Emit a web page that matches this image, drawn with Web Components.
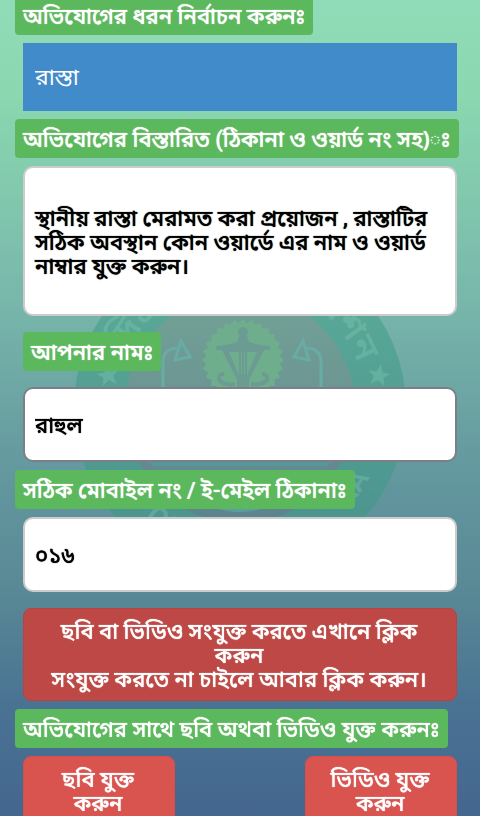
<!DOCTYPE html>
<html lang="bn"><head><meta charset="utf-8"><meta name="viewport" content="width=device-width"><title>অভিযোগ ফর্ম</title>
<style>
html{min-height:100%}
body{margin:0;color:#fff;font-family:Roboto,"Noto Sans Bengali",sans-serif}
</style></head><body>
<page-backdrop></page-backdrop>
<complaint-form>
<field-label>অভিযোগের ধরন নির্বাচন করুনঃ</field-label>
<type-select></type-select>
<field-label>অভিযোগের বিস্তারিত (ঠিকানা ও ওয়ার্ড নং সহ)ঃ</field-label>
<detail-field label="অভিযোগের বিস্তারিত" value="স্থানীয় রাস্তা মেরামত করা প্রয়োজন , রাস্তাটির সঠিক অবস্থান কোন ওয়ার্ডে এর নাম ও ওয়ার্ড নাম্বার যুক্ত করুন।"></detail-field>
<field-label class="inset">আপনার নামঃ</field-label>
<text-field class="strong" label="আপনার নাম" value="রাহুল"></text-field>
<field-label>সঠিক মোবাইল নং / ই-মেইল ঠিকানাঃ</field-label>
<text-field label="সঠিক মোবাইল নং / ই-মেইল ঠিকানা" value="০১৬"></text-field>
<action-button class="wide">ছবি বা ভিডিও সংযুক্ত করতে এখানে ক্লিক করুন<br>সংযুক্ত করতে না চাইলে আবার ক্লিক করুন।</action-button>
<field-label>অভিযোগের সাথে ছবি অথবা ভিডিও যুক্ত করুনঃ</field-label>
<button-row><action-button>ছবি যুক্ত করুন</action-button><action-button>ভিডিও যুক্ত করুন</action-button></button-row>
</complaint-form>
<script>
function define(name, html, init) {
  const t = document.createElement('template');
  t.innerHTML = html;
  customElements.define(name, class extends HTMLElement {
    constructor() { super(); this.attachShadow({mode: 'open'}).append(t.content.cloneNode(true)); }
    connectedCallback() { if (init) init(this, this.shadowRoot); }
  });
}
const spikes = Array.from({length: 56}, (_, i) => {
  const a = i * Math.PI / 28, r = i % 2 ? 37 : 41;
  return Math.round(Math.cos(a) * r * 10) / 10 + ',' + Math.round(Math.sin(a) * r * 10) / 10;
}).join(' ');
const star = '0,-11 3,-3 11,-3 5,2 7,10 0,5 -7,10 -5,2 -11,-3 -3,-3';

define('page-backdrop', `<style>
:host{position:fixed;inset:0;z-index:-1;display:grid;place-items:center;overflow:hidden;
background:linear-gradient(180deg,#90dcb8 0%,#8ad7b0 12%,#84cdae 20%,#77b5aa 38%,#64999f 57%,#588895 73%,#4a7393 86%,#44668f 100%)}
svg{width:334px;height:334px;display:block;font-family:Roboto,"Noto Sans Bengali",sans-serif;font-weight:600}
</style>
<svg viewBox="-167 -167 334 334" aria-hidden="true">
<defs><path id="top" d="M-126 0A126 126 0 0 1 126 0"/><path id="bottom" d="M-147 0A147 147 0 0 0 147 0"/>
<linearGradient id="disc" x1="0" y1="0" x2="0" y2="1"><stop offset="0" stop-color="#73a295"/><stop offset=".45" stop-color="#6b9593"/><stop offset="1" stop-color="#5c838c"/></linearGradient></defs>
<circle r="166" fill="#3a9a84" fill-opacity=".5"/>
<circle r="115" fill="url(#disc)"/>
<g fill="#86cbb6" fill-opacity=".34">
<g font-size="36"><text><textPath href="#top" startOffset="58">দিগ্রা</textPath></text>
<text text-anchor="end"><textPath href="#top" startOffset="350">পুরেশন</textPath></text></g>
<g font-size="29"><text><textPath href="#bottom" startOffset="78">Y</textPath></text><text><textPath href="#bottom" startOffset="126">CO</textPath></text><text><textPath href="#bottom" startOffset="280">BD</textPath></text><text><textPath href="#bottom" startOffset="352">RA</textPath></text></g>
<polygon transform="translate(-132 -33) rotate(-10)" points="${star}"/><polygon transform="translate(139 -33) rotate(10)" points="${star}"/>
</g>
<g transform="translate(3 -48)">
<polygon points="${spikes}" fill="#6fae8d"/>
<g fill="#6b9b92"><circle cy="-28" r="5"/><path d="M-4-24H4L6-18Q14-15 27-14V-10H21L6 20V32H-6V20L-21-10H-27V-14Q-14-15-6-18Z"/></g>
<path d="M-14-8H-4V15ZM14-8H4V15ZM-2-8H-1V14H-2ZM2-8H1V14H2Z" fill="#6fae8d"/>
<path d="M-8 24Q-18 26-24 20Q-25 14-19 14M8 24Q18 26 24 20Q25 14 19 14" fill="none" stroke="#6b9b92" stroke-width="4"/>
</g>
<g fill="none" stroke="#69aba5" stroke-width="3">
<path d="M-77-18V-46Q-77-60-61-60M81-18V-46Q81-60 65-60"/>
<path d="M-59-67L-50-51L-65-48ZM63-67L54-51L69-48Z"/></g>
<path d="M-92 54H92L86 58H-86Z" fill="#579798"/>
<path d="M-78 64Q0 144 78 64Z" fill="#5b9da1"/>
</svg>`);

define('complaint-form', `<style>
:host{display:block;padding:0 23px 24px 15px;margin-top:-4px}
form{display:flex;flex-direction:column;align-items:stretch;gap:8px}
::slotted(*){margin-left:8px}
::slotted(field-label){margin-left:0;align-self:flex-start}
::slotted(field-label.inset){margin:8px 0 8px 8px}
::slotted(.wide){margin-top:8px}
</style><form><slot></slot></form>`);

define('field-label', `<style>
:host{display:block}
label{display:block;box-sizing:border-box;padding:9px 8px 6px;background:#5cb85c;border-radius:4px;font-size:22px;line-height:24px;font-weight:500;white-space:nowrap;text-shadow:0 0 1px #fff}
</style><label><slot></slot></label>`, (host, root) => {
  root.querySelector('label').addEventListener('click', () => host.nextElementSibling.shadowRoot.querySelector('input,select,textarea,button')?.focus());
});

define('type-select', `<style>
:host{display:block}
select{appearance:none;display:block;width:100%;height:68px;padding:2px 12px 0;border:0;border-radius:0;background:#428bca;color:#fff;font:400 23px/32px Roboto,"Noto Sans Bengali",sans-serif}
</style><select aria-label="অভিযোগের ধরন"><option>রাস্তা</option></select>`);

const field = `:host{display:block}
input,textarea{display:block;box-sizing:border-box;width:100%;margin:0;border:2px solid var(--edge,#ccc);border-radius:10px;background:#fff;color:#000;font:500 22px/24px Roboto,"Noto Sans Bengali",sans-serif;text-shadow:0 0 1px #000;outline:0}
input{height:75px;padding:6px 10px 0}
textarea{height:150px;padding:39px 10px 35px;resize:none;overflow:hidden}
:host(.strong){--edge:#7b8088}`;
const fill = (host, root) => {
  const c = root.querySelector('input,textarea');
  c.value = host.getAttribute('value');
  c.setAttribute('aria-label', host.getAttribute('label'));
};
define('text-field', `<style>${field}</style><input type="text">`, fill);
define('detail-field', `<style>${field}</style><textarea></textarea>`, fill);

define('action-button', `<style>
:host{display:block}
button{display:block;width:100%;margin:0;padding:11px 18px 8px 16px;border:1px solid #d9534f;border-color:#d74e4a;border-radius:8px;background:#d9534f;color:#fff;font:500 22px/24px Roboto,"Noto Sans Bengali",sans-serif;text-shadow:0 0 1px #fff}
:host(.wide) button{background:#bd4845;border-color:#b94340}
</style><button type="button"><slot></slot></button>`);

define('button-row', `<style>
:host{display:flex;justify-content:space-between}
::slotted(*){width:35%}
</style><slot></slot>`);
</script></body></html>
